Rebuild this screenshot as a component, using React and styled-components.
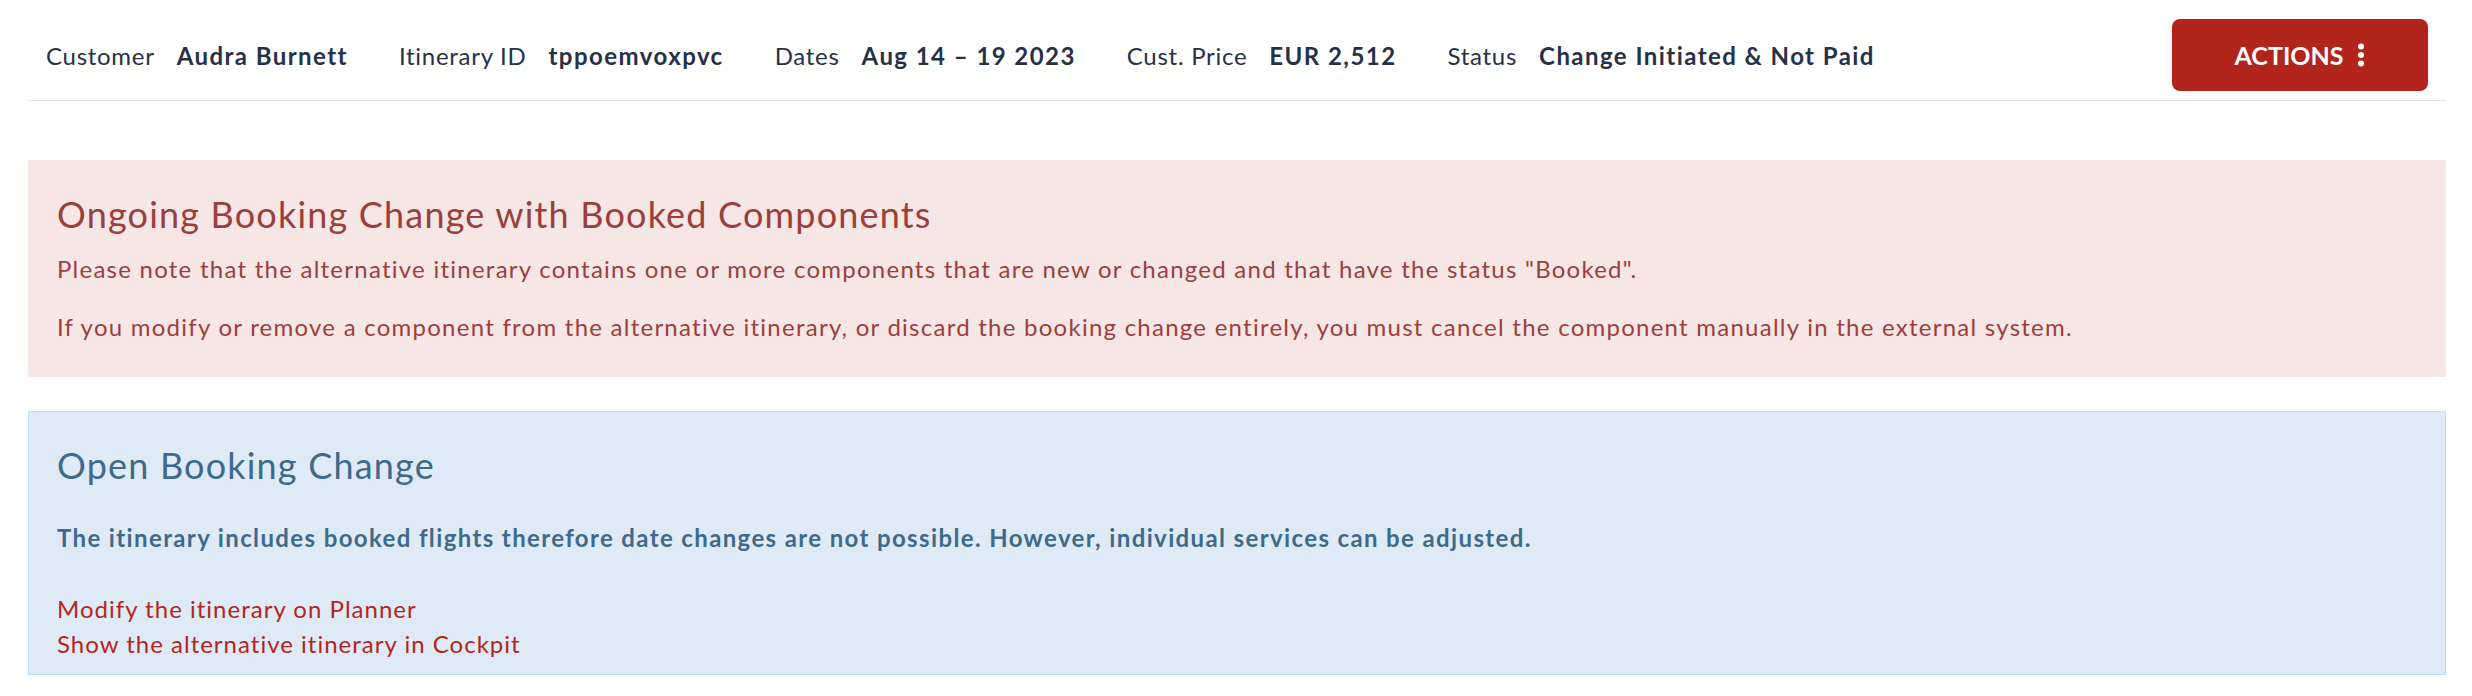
import React from "react";
import styled, { createGlobalStyle } from "styled-components";

const GlobalStyle = createGlobalStyle`
  body {
    margin: 0;
    background: #ffffff;
    font-family: Lato, "Open Sans", sans-serif;
    color: #263147;
  }
  * {
    box-sizing: border-box;
  }
`;

const Page = styled.div`
  padding: 0 26px 0 28px;
`;

const Header = styled.header`
  display: flex;
  align-items: center;
  justify-content: space-between;
  padding: 19px 18px 9px 18px;
  border-bottom: 1px solid #e4e4e4;
`;

const Facts = styled.div`
  display: flex;
  align-items: center;
  gap: 51px;
  font-size: 24px;
`;

const Fact = styled.div`
  display: flex;
  align-items: baseline;
  gap: 22px;
`;

const Label = styled.span`
  font-weight: 400;
  letter-spacing: 0.03em;
`;

const Value = styled.span`
  font-weight: 700;
  letter-spacing: 0.06em;
`;

const ActionsButton = styled.button`
  width: 256px;
  height: 72px;
  display: flex;
  align-items: center;
  justify-content: center;
  gap: 14px;
  border: none;
  border-radius: 8px;
  background: #b3241c;
  color: #ffffff;
  font-family: Lato, "Open Sans", sans-serif;
  font-size: 25px;
  font-weight: 700;
  cursor: pointer;
`;

const Alert = styled.section`
  margin-top: ${(p) => p.$top}px;
  padding: 32px 28px ${(p) => p.$bottom}px 28px;
  background: ${(p) => (p.$tone === "info" ? "#deebf6" : "#f6e6e5")};
  border: 1px solid ${(p) => (p.$tone === "info" ? "#b5e0ef" : "#f6e6e5")};
  color: ${(p) => (p.$tone === "info" ? "#3f6a8b" : "#9b3f3c")};
`;

const AlertTitle = styled.h2`
  margin: 0;
  font-size: 36px;
  line-height: 43px;
  font-weight: 400;
  letter-spacing: 0.033em;
`;

const AlertText = styled.p`
  margin: ${(p) => p.$top || 0}px 0 0 0;
  font-size: 24px;
  line-height: 36px;
  font-weight: ${(p) => (p.$bold ? 700 : 400)};
  letter-spacing: ${(p) => (p.$bold ? "0.057em" : "0.052em")};
`;

const Links = styled.div`
  margin-top: 35px;
  display: flex;
  flex-direction: column;
`;

const Link = styled.a`
  font-size: 24px;
  line-height: 35px;
  letter-spacing: 0.042em;
  color: #b3251c;
  text-decoration: none;
`;

const Kebab = () => (
  <svg width="8" height="24" viewBox="0 0 8 24">
    <circle cx="4" cy="3.5" r="3" fill="#ffffff" />
    <circle cx="4" cy="12" r="3" fill="#ffffff" />
    <circle cx="4" cy="20.5" r="3" fill="#ffffff" />
  </svg>
);

const facts = [
  ["Customer", "Audra Burnett"],
  ["Itinerary ID", "tppoemvoxpvc"],
  ["Dates", "Aug 14 – 19 2023"],
  ["Cust. Price", "EUR 2,512"],
  ["Status", "Change Initiated & Not Paid"],
];

export default function App() {
  return (
    <Page>
      <GlobalStyle />
      <Header>
        <Facts>
          {facts.map(([label, value]) => (
            <Fact key={label}>
              <Label>{label}</Label>
              <Value>{value}</Value>
            </Fact>
          ))}
        </Facts>
        <ActionsButton>
          ACTIONS
          <Kebab />
        </ActionsButton>
      </Header>

      <Alert $top={59} $bottom={31}>
        <AlertTitle>Ongoing Booking Change with Booked Components</AlertTitle>
        <AlertText $top={15}>
          Please note that the alternative itinerary contains one or more
          components that are new or changed and that have the status
          "Booked".
        </AlertText>
        <AlertText $top={22}>
          If you modify or remove a component from the alternative itinerary,
          or discard the booking change entirely, you must cancel the component
          manually in the external system.
        </AlertText>
      </Alert>

      <Alert $tone="info" $top={34} $bottom={13}>
        <AlertTitle>Open Booking Change</AlertTitle>
        <AlertText $top={33} $bold>
          The itinerary includes booked flights therefore date changes are not
          possible. However, individual services can be adjusted.
        </AlertText>
        <Links>
          <Link href="#">Modify the itinerary on Planner</Link>
          <Link href="#">Show the alternative itinerary in Cockpit</Link>
        </Links>
      </Alert>
    </Page>
  );
}
